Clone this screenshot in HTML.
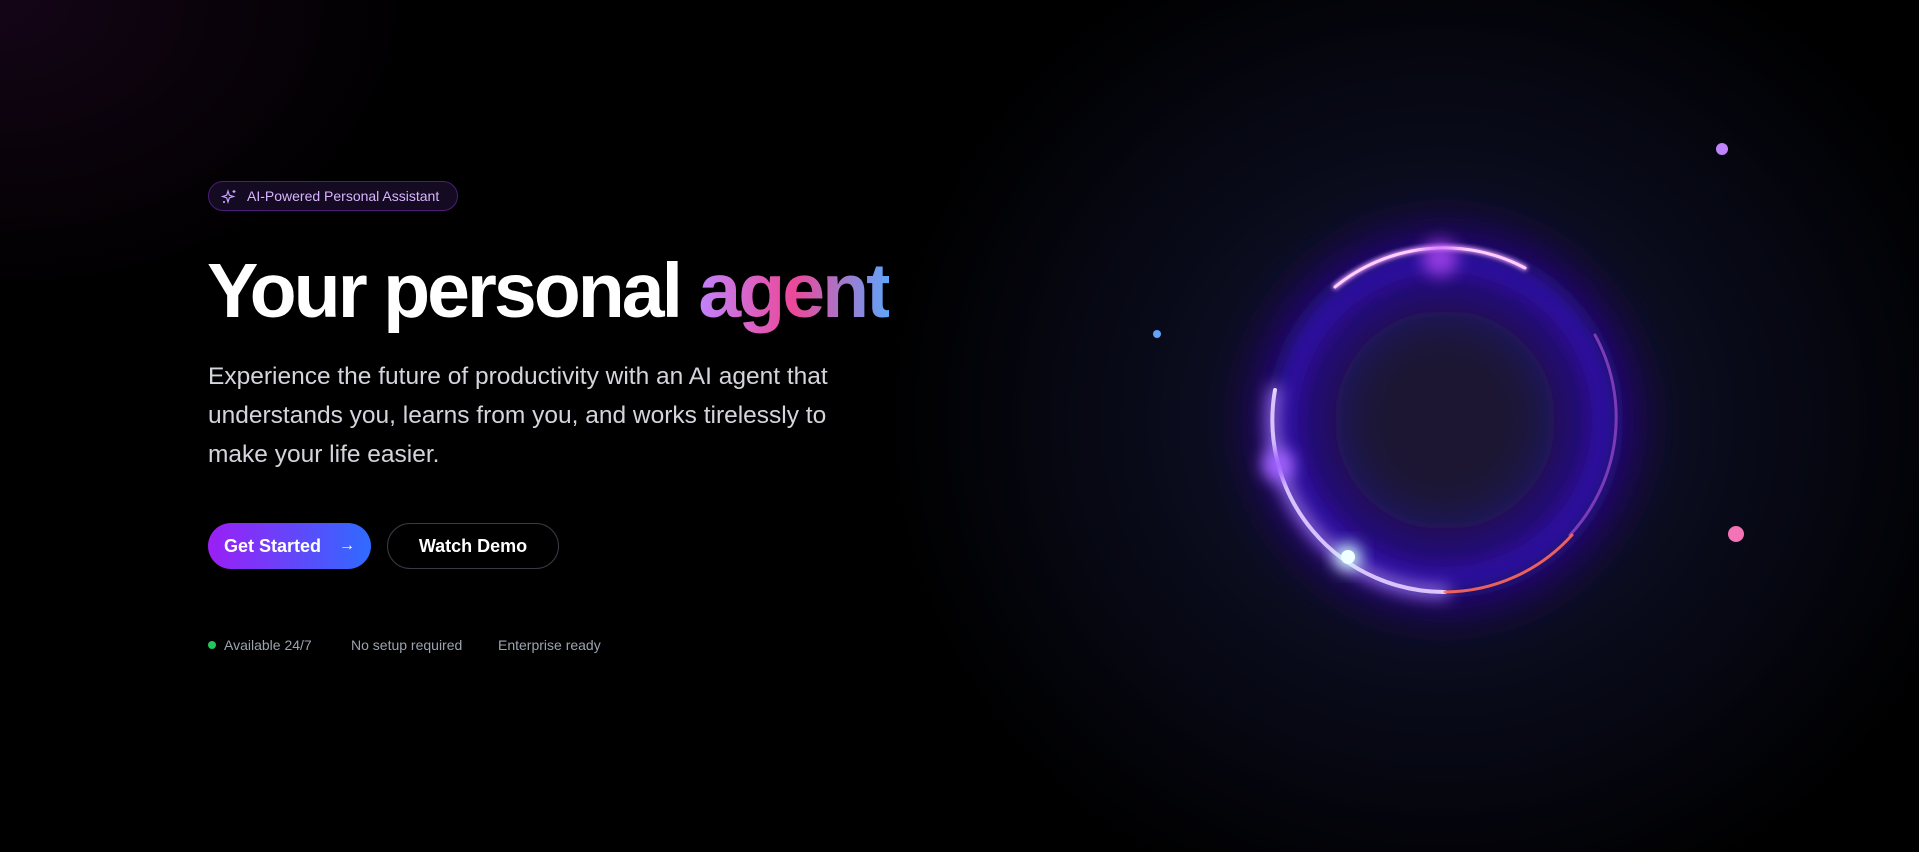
<!DOCTYPE html>
<html><head><meta charset="utf-8"><style>
*{margin:0;padding:0;box-sizing:border-box}
html,body{width:1919px;height:852px;overflow:hidden;background:#000;font-family:"Liberation Sans",sans-serif}
.bg{position:absolute;inset:0;background:
radial-gradient(ellipse 560px 520px at 1440px 420px,rgba(24,22,56,.95),rgba(12,14,34,.7) 55%,rgba(0,0,0,0) 100%),
radial-gradient(ellipse 420px 300px at 0px 0px,rgba(40,10,45,.5),rgba(0,0,0,0) 100%);}
.badge{position:absolute;left:208px;top:181px;width:250px;height:30px;border:1px solid #4c1d7a;border-radius:15px;background:#140a22;color:#d8b4fe;font-size:14px;line-height:28px;padding-left:38px}
.badge svg{position:absolute;left:12px;top:7px}
h1{position:absolute;left:207px;top:243px;font-size:77px;font-weight:700;color:#fff;letter-spacing:-3px;white-space:nowrap;line-height:96px}
h1 span{background:linear-gradient(90deg,#c084fc,#ec4899 50%,#60a5fa);-webkit-background-clip:text;background-clip:text;color:transparent}
p.lead{position:absolute;left:208px;top:357px;width:670px;font-size:24.5px;line-height:39px;color:#d4d4dc}
.btn1{position:absolute;left:208px;top:523px;width:163px;height:46px;border-radius:23px;background:linear-gradient(90deg,#9b1ff5,#2f6bff);color:#fff;font-weight:700;font-size:18px;line-height:46px;padding-left:16px}
.btn1 i{position:absolute;right:16px;top:0;font-style:normal;font-size:16px}
.btn2{position:absolute;left:387px;top:523px;width:172px;height:46px;border-radius:23px;border:1px solid #3a3a44;color:#fff;font-weight:700;font-size:18px;line-height:44px;text-align:center}
.meta{position:absolute;top:637px;font-size:14px;color:#9ca3af}
.dot{position:absolute;border-radius:50%}
</style></head><body>
<div class="bg"></div>
<div class="badge"><svg width="16" height="16" viewBox="0 0 16 16" fill="none" stroke="#c4a2ff" stroke-width="1.2"><path d="M7 2 L8.3 6.2 L12.5 7.5 L8.3 8.8 L7 13 L5.7 8.8 L1.5 7.5 L5.7 6.2 Z"/><path d="M13 1v3M11.5 2.5h3M3 12v2M2 13h2"/></svg>AI-Powered Personal Assistant</div>
<h1>Your personal <span>agent</span></h1>
<p class="lead">Experience the future of productivity with an AI agent that understands you, learns from you, and works tirelessly to make your life easier.</p>
<div class="btn1">Get Started<i>→</i></div>
<div class="btn2">Watch Demo</div>
<div class="dot" style="left:208px;top:641px;width:8px;height:8px;background:#22c55e"></div>
<div class="meta" style="left:224px">Available 24/7</div>
<div class="meta" style="left:351px">No setup required</div>
<div class="meta" style="left:498px">Enterprise ready</div>
<svg style="position:absolute;left:0;top:0" width="1919" height="852">
<defs>
<filter id="b1" x="-50%" y="-50%" width="200%" height="200%"><feGaussianBlur stdDeviation="25"/></filter>
<filter id="b2" x="-50%" y="-50%" width="200%" height="200%"><feGaussianBlur stdDeviation="8"/></filter>
<filter id="b3" x="-50%" y="-50%" width="200%" height="200%"><feGaussianBlur stdDeviation="2"/></filter>
<radialGradient id="in" cx="50%" cy="50%" r="50%"><stop offset="0.45" stop-color="#1a1432"/><stop offset="0.8" stop-color="#2c0aa0"/><stop offset="0.88" stop-color="#2a0a90" stop-opacity=".6"/><stop offset="1" stop-color="#2a0a90" stop-opacity="0"/></radialGradient>
</defs>
<circle cx="1445" cy="420" r="205" fill="url(#in)" filter="url(#b1)"/>
<circle cx="1445" cy="420" r="158" fill="none" stroke="#3510c8" stroke-width="22" opacity=".5" filter="url(#b2)"/>
<g fill="none" stroke-linecap="round">
<path d="M1335 287 A172 172 0 0 1 1525 268" stroke="#f0a0ff" stroke-width="5" filter="url(#b3)"/>
<path d="M1335 287 A172 172 0 0 1 1525 268" stroke="#ffd0ff" stroke-width="3"/>
<path d="M1595 335 A172 172 0 0 1 1570 535" stroke="#a050d0" stroke-width="3" opacity=".7"/>
<path d="M1275 390 A172 172 0 0 0 1445 592" stroke="#fff" stroke-width="4"/>
<path d="M1275 390 A172 172 0 0 0 1445 592" stroke="#b080ff" stroke-width="10" filter="url(#b2)"/>
<path d="M1445 592 A172 172 0 0 0 1572 535" stroke="#ff6a5a" stroke-width="3" opacity=".9"/>
</g>
<circle cx="1348" cy="557" r="13" fill="#d0ffff" filter="url(#b2)"/>
<circle cx="1348" cy="557" r="7" fill="#f0ffff"/>
<circle cx="1278" cy="465" r="16" fill="#a060ff" filter="url(#b2)"/>
<circle cx="1440" cy="258" r="18" fill="#c050ff" opacity=".7" filter="url(#b2)"/>
<circle cx="1722" cy="149" r="6" fill="#c084fc"/>
<circle cx="1157" cy="334" r="4" fill="#60a5fa"/>
<circle cx="1736" cy="534" r="8" fill="#f472b6"/>
</svg>
</body></html>
